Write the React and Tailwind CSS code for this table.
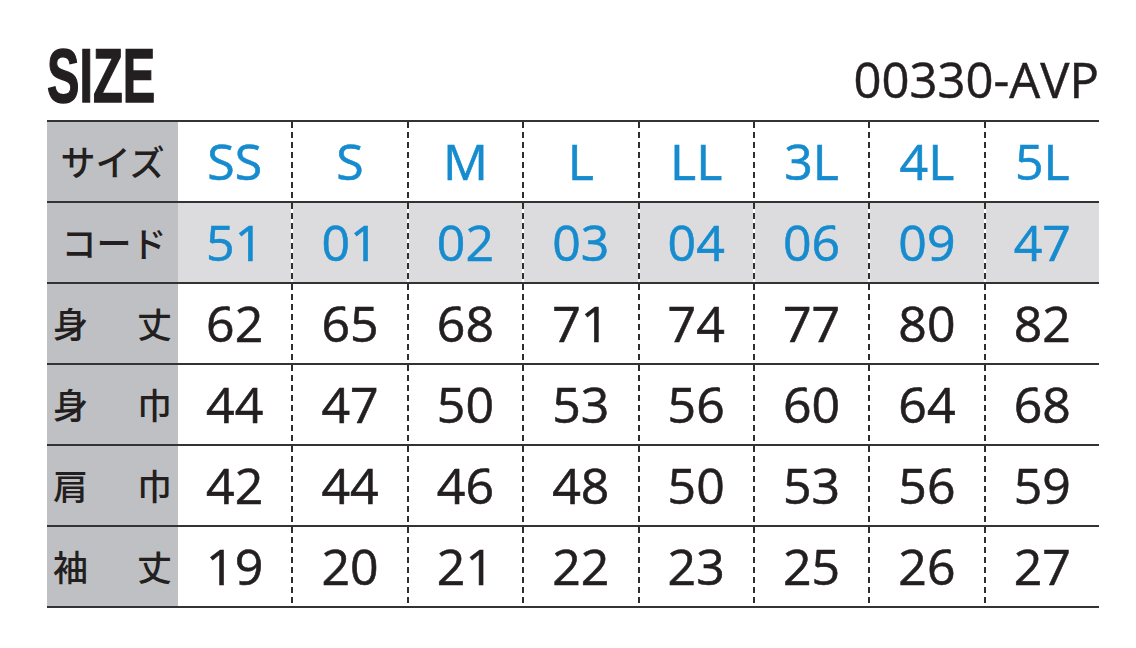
import React from 'react';

const sizes = ['SS', 'S', 'M', 'L', 'LL', '3L', '4L', '5L'];
const codes = ['51', '01', '02', '03', '04', '06', '09', '47'];

const rows = [
  { label: ['身', '丈'], values: [62, 65, 68, 71, 74, 77, 80, 82] },
  { label: ['身', '巾'], values: [44, 47, 50, 53, 56, 60, 64, 68] },
  { label: ['肩', '巾'], values: [42, 44, 46, 48, 50, 53, 56, 59] },
  { label: ['袖', '丈'], values: [19, 20, 21, 22, 23, 25, 26, 27] },
];

const jp = "[font-family:'Noto_Sans_CJK_JP',sans-serif]";
const num = "[font-family:'Open_Sans',sans-serif]";

// dashed column divider, white gaps even on the grey row
const Divider = () => (
  <div className="w-[2px] shrink-0 self-stretch bg-[repeating-linear-gradient(to_bottom,#2e2e2e_0px,#2e2e2e_6px,#ffffff_6px,#ffffff_10px)]" />
);

const Row = ({ label, cells, cellBg = 'bg-white', textColor = 'text-[#231f20]' }) => (
  <div className="flex h-[81px] border-t-2 border-[#333333]">
    <div className={`w-[131px] shrink-0 bg-[#bfc0c3] flex items-center text-[35px] font-medium text-[#231f20] ${jp}`}>
      {label}
    </div>
    {cells.map((c, i) => (
      <React.Fragment key={i}>
        {i > 0 && <Divider />}
        <div className={`flex-1 flex items-center justify-center text-[50px] [-webkit-text-stroke:0.6px_currentColor] ${cellBg} ${textColor} ${num}`}>
          {c}
        </div>
      </React.Fragment>
    ))}
  </div>
);

export default function App() {
  return (
    <div className="w-[1136px] h-[648px] bg-white pl-[47px] pr-[37px] pt-[44px]">
      <div className="flex items-end justify-between h-[76px]">
        <div className="h-full flex items-end">
          <span className="inline-block origin-left scale-x-[0.64] text-[76px] font-bold leading-none text-[#231f20] [font-family:'Liberation_Sans',sans-serif] mb-[6px] [-webkit-text-stroke:1.5px_#231f20]">
            SIZE
          </span>
        </div>
        <span className={`text-[49px] leading-none text-[#231f20] mb-[16px] [-webkit-text-stroke:0.5px_#231f20] ${num}`}>00330-AVP</span>
      </div>
      <div className="border-b-2 border-[#333333]">
        <Row
          label={<span className="w-full text-center">サイズ</span>}
          cells={sizes}
          textColor="text-[#168bce]"
        />
        <Row
          label={<span className="w-full text-center pl-[3px]">コード</span>}
          cells={codes}
          cellBg="bg-[#dcdcde]"
          textColor="text-[#168bce]"
        />
        {rows.map((r, i) => (
          <Row
            key={i}
            label={
              <div className="w-full flex justify-between px-[6px]">
                <span>{r.label[0]}</span>
                <span>{r.label[1]}</span>
              </div>
            }
            cells={r.values}
          />
        ))}
      </div>
    </div>
  );
}
